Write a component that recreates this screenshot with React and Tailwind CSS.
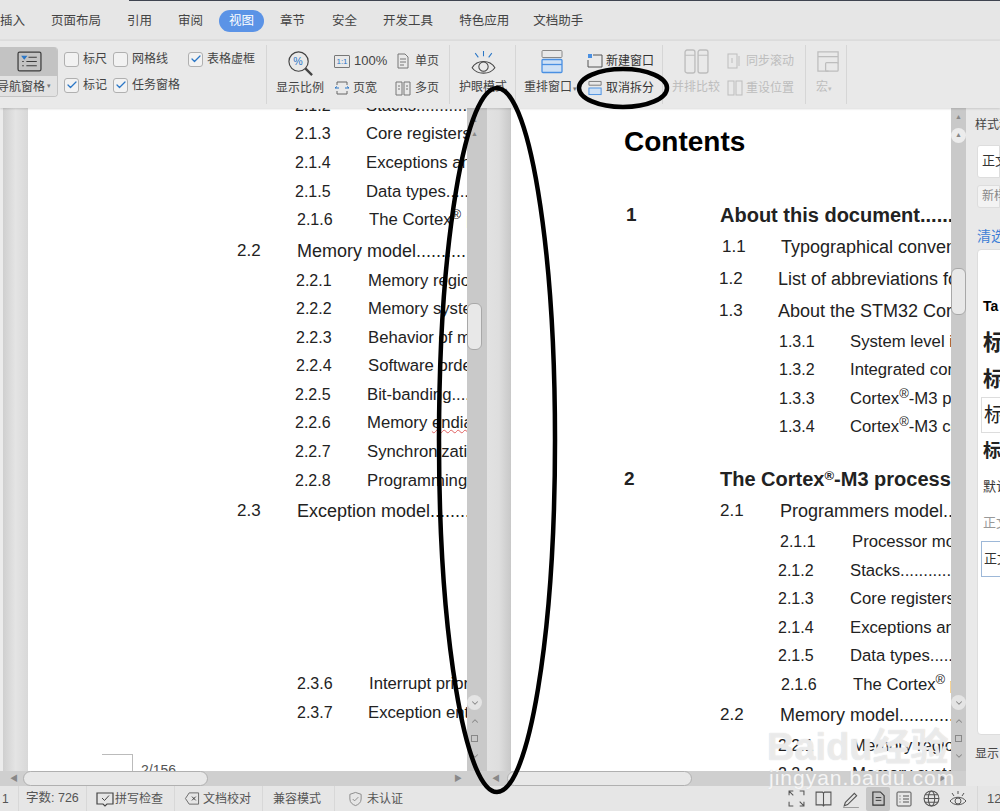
import { Check, ChevronUp, ChevronDown } from "lucide-react"

const tabs = [
  { name: '插入', cls: 'ml-0 mr-[26px]' },
  { name: '页面布局', cls: 'mr-[26px]' },
  { name: '引用', cls: 'mr-[26px]' },
  { name: '审阅', cls: 'mr-[16px]' },
  { name: '视图', cls: 'mr-[16px] px-[10px] h-[22px] rounded-full bg-[#5b93e6] text-white' },
  { name: '章节', cls: 'mr-[27px]' },
  { name: '安全', cls: 'mr-[26px]' },
  { name: '开发工具', cls: 'mr-[26px]' },
  { name: '特色应用', cls: 'mr-[24px]' },
  { name: '文档助手', cls: '' },
]

const leftRows = [
  { pl: 'pl-[267px]', w: 'w-[71px]', h: 'h-[28px]', num: '2.1.2', text: 'Stacks.....................' },
  { pl: 'pl-[267px]', w: 'w-[71px]', h: 'h-[29px]', num: '2.1.3', text: 'Core registers...........' },
  { pl: 'pl-[267px]', w: 'w-[71px]', h: 'h-[29px]', num: '2.1.4', text: 'Exceptions and fault' },
  { pl: 'pl-[267px]', w: 'w-[71px]', h: 'h-[28px]', num: '2.1.5', text: 'Data types..................' },
  { pl: 'pl-[269px]', w: 'w-[72px]', h: 'h-[31px]', num: '2.1.6', text: 'The Cortex', sup: true, orange: true },
  { pl: 'pl-[209px]', w: 'w-[60px]', h: 'h-[30px]', num: '2.2', text: 'Memory model.........................', big: true },
  { pl: 'pl-[268px]', w: 'w-[72px]', h: 'h-[28px]', num: '2.2.1', text: 'Memory regions' },
  { pl: 'pl-[268px]', w: 'w-[72px]', h: 'h-[29px]', num: '2.2.2', text: 'Memory system' },
  { pl: 'pl-[268px]', w: 'w-[72px]', h: 'h-[28px]', num: '2.2.3', text: 'Behavior of memory' },
  { pl: 'pl-[268px]', w: 'w-[72px]', h: 'h-[29px]', num: '2.2.4', text: 'Software ordering' },
  { pl: 'pl-[267px]', w: 'w-[72px]', h: 'h-[28px]', num: '2.2.5', text: 'Bit-banding..................' },
  { pl: 'pl-[267px]', w: 'w-[72px]', h: 'h-[29px]', num: '2.2.6', text: 'Memory ', squiggle: 'endianness' },
  { pl: 'pl-[267px]', w: 'w-[72px]', h: 'h-[29px]', num: '2.2.7', text: 'Synchronization' },
  { pl: 'pl-[267px]', w: 'w-[72px]', h: 'h-[30px]', num: '2.2.8', text: 'Programming hints' },
  { pl: 'pl-[209px]', w: 'w-[60px]', h: 'h-[173px]', num: '2.3', text: 'Exception model...........................', big: true },
  { pl: 'pl-[269px]', w: 'w-[72px]', h: 'h-[29px]', num: '2.3.6', text: 'Interrupt priority' },
  { pl: 'pl-[269px]', w: 'w-[71px]', h: 'h-[51px]', num: '2.3.7', text: 'Exception entry' },
]

const rightRows = [
  { pl: 'pl-[115px]', w: 'w-[94px]', h: 'h-[32px]', num: '1', text: 'About this document.......................', bold: true },
  { pl: 'pl-[211px]', w: 'w-[59px]', h: 'h-[32px]', num: '1.1', text: 'Typographical conventions', big: true },
  { pl: 'pl-[208px]', w: 'w-[59px]', h: 'h-[32px]', num: '1.2', text: 'List of abbreviations for', big: true },
  { pl: 'pl-[208px]', w: 'w-[59px]', h: 'h-[31px]', num: '1.3', text: 'About the STM32 Cortex', big: true },
  { pl: 'pl-[268px]', w: 'w-[71px]', h: 'h-[28px]', num: '1.3.1', text: 'System level interface' },
  { pl: 'pl-[268px]', w: 'w-[71px]', h: 'h-[29px]', num: '1.3.2', text: 'Integrated configurable' },
  { pl: 'pl-[268px]', w: 'w-[71px]', h: 'h-[28px]', num: '1.3.3', text: 'Cortex', sup: true, after: '-M3 processor' },
  { pl: 'pl-[268px]', w: 'w-[71px]', h: 'h-[52px]', num: '1.3.4', text: 'Cortex', sup: true, after: '-M3 core' },
  { pl: 'pl-[113px]', w: 'w-[96px]', h: 'h-[32px]', num: '2', text: 'The Cortex', sup: true, after: '-M3 processor', bold: true },
  { pl: 'pl-[209px]', w: 'w-[60px]', h: 'h-[31px]', num: '2.1', text: 'Programmers model...........................', big: true },
  { pl: 'pl-[269px]', w: 'w-[72px]', h: 'h-[29px]', num: '2.1.1', text: 'Processor mode' },
  { pl: 'pl-[267px]', w: 'w-[72px]', h: 'h-[28px]', num: '2.1.2', text: 'Stacks.......................' },
  { pl: 'pl-[267px]', w: 'w-[72px]', h: 'h-[29px]', num: '2.1.3', text: 'Core registers' },
  { pl: 'pl-[267px]', w: 'w-[72px]', h: 'h-[28px]', num: '2.1.4', text: 'Exceptions and' },
  { pl: 'pl-[267px]', w: 'w-[72px]', h: 'h-[29px]', num: '2.1.5', text: 'Data types..................' },
  { pl: 'pl-[270px]', w: 'w-[72px]', h: 'h-[30px]', num: '2.1.6', text: 'The Cortex', sup: true, after: ' processor' },
  { pl: 'pl-[209px]', w: 'w-[60px]', h: 'h-[31px]', num: '2.2', text: 'Memory model.........................', big: true },
  { pl: 'pl-[267px]', w: 'w-[74px]', h: 'h-[28px]', num: '2.2.1', text: 'Memory regions' },
  { pl: 'pl-[267px]', w: 'w-[74px]', h: 'h-[28px]', num: '2.2.2', text: 'Memory system' },
]

const styleItems = [
  { text: 'Ta', cls: 'h-[36px] text-[14px] font-bold text-black' },
  { text: '标题 1', cls: 'h-[37px] text-[22px] font-bold text-[#222]' },
  { text: '标题 2', cls: 'h-[36px] text-[21px] font-bold text-[#222]' },
  { text: '标题 3', cls: 'h-[36px] text-[20px] text-[#222] border border-[#ddd] border-r-0' },
  { text: '标题 4', cls: 'h-[36px] text-[18px] font-bold text-[#222]' },
  { text: '默认段落', cls: 'h-[36px] text-[13px] text-[#333]' },
  { text: '正文', cls: 'h-[36px] text-[13px] text-[#999]' },
  { text: '正文', cls: 'h-[36px] text-[13px] text-[#333] border border-[#9db8d8] border-r-0' },
]

const Icon = ({ className, vb = "0 0 16 16", children }) => (
  <svg viewBox={vb} fill="none" stroke="currentColor" strokeWidth="1" className={className}>{children}</svg>
)

const Box = ({ label, checked, cls }) => (
  <div className={`flex items-center gap-[4px] ${cls}`}>
    <span className="flex items-center justify-center w-[15px] h-[15px] rounded-[3px] border border-[#b0b0b0] bg-[#f2f2f2]">
      {checked && <Check size={12} strokeWidth={2.5} className="text-[#2a76c6]" />}
    </span>
    <span>{label}</span>
  </div>
)

const SmallBtn = ({ icon, label, cls = '' }) => (
  <div className={`flex items-center h-[18px] whitespace-nowrap ${cls}`}>
    {icon}
    <span>{label}</span>
  </div>
)

const Divider = () => <div className="w-px my-[4px] bg-[#d6d6d6] shrink-0"></div>

const Ribbon = () => (
  <div className="flex h-[67px] bg-[#e9e9e9] text-[12px] text-[#444] shadow-[0_1px_2px_rgba(0,0,0,0.15)] relative overflow-hidden shrink-0">
    <div className="w-[266px] shrink-0 flex">
      <div className="w-[58px] h-[50px] mt-[6px] rounded-r-[4px] overflow-hidden border-b border-r border-[#c4c4c4] shrink-0">
        <div className="h-[29px] bg-[#c3c3c3] flex items-center justify-center pl-[2px]">
          <Icon vb="0 0 24 20" className="w-[25px] h-[21px] text-[#3c3c3c]">
            <rect x="1" y="1" width="22" height="18" rx="1.5" strokeWidth="1.2" />
            <path d="M5 5h4l-2 2.5z" fill="#2a76c6" stroke="#2a76c6" />
            <path d="M11 6h8M5 10h1.5M9 10h10M5 14h1.5M9 14h10" />
          </Icon>
        </div>
        <div className="h-[21px] bg-[#e2e2e2] flex items-center -ml-[3px] whitespace-nowrap">导航窗格<span className="ml-[2px] text-[7px] text-[#777]">▾</span></div>
      </div>
      <div className="w-[49px] ml-[6px] pt-[9px] flex flex-col gap-[8px] shrink-0">
        <Box label="标尺" />
        <Box label="标记" checked />
      </div>
      <div className="w-[75px] pt-[9px] flex flex-col gap-[8px] shrink-0">
        <Box label="网格线" />
        <Box label="任务窗格" checked />
      </div>
      <div className="pt-[9px] shrink-0">
        <Box label="表格虚框" checked />
      </div>
    </div>
    <Divider />
    <div className="w-[182px] shrink-0 flex">
      <div className="w-[67px] pl-[9px] pt-[9px] shrink-0 flex flex-col">
        <div className="flex justify-center w-[49px] h-[28px]">
          <Icon vb="0 0 28 28" className="w-[27px] h-[27px] text-[#444]">
            <circle cx="12" cy="12" r="10" strokeWidth="1.2" />
            <path d="M19 19l7 7" strokeWidth="2.4" />
            <text x="6.5" y="16" fontSize="11" fill="#2a76c6" stroke="none" fontFamily="Liberation Sans">%</text>
          </Icon>
        </div>
        <div className="mt-[1px] whitespace-nowrap">显示比例</div>
      </div>
      <div className="w-[61px] pt-[11px] flex flex-col gap-[9px] shrink-0">
        <SmallBtn label="100%" cls="text-[13px]" icon={
          <span className="w-[16px] h-[13px] border border-[#777] rounded-[1px] mr-[4px] text-[8px] leading-[11px] text-center text-[#2a76c6]">1:1</span>
        } />
        <SmallBtn label="页宽" icon={
          <Icon className="w-[16px] h-[16px] mr-[3px] text-[#666]"><path d="M3 5V2h10v3M3 11v3h10v-3" /><path d="M1 8h4M11 8h4M1 8l2-1.5M15 8l-2-1.5" stroke="#2a76c6" /></Icon>
        } />
      </div>
      <div className="pt-[11px] flex flex-col gap-[9px] shrink-0">
        <SmallBtn label="单页" icon={
          <Icon className="w-[16px] h-[16px] mr-[4px] text-[#777]"><path d="M3 1h7l3 3v11H3z" /><path d="M5 6h6M5 9h6M5 12h4" /></Icon>
        } />
        <SmallBtn label="多页" icon={
          <Icon className="w-[16px] h-[16px] mr-[4px] text-[#777]"><path d="M1 2h6v13H1zM9 2h6v13H9z" /><path d="M3 6h2M3 9h2M11 6h2M11 9h2" /></Icon>
        } />
      </div>
    </div>
    <Divider />
    <div className="w-[65px] pl-[9px] pt-[7px] shrink-0 flex flex-col">
      <div className="flex justify-center w-[48px] h-[30px]">
        <Icon vb="0 0 28 28" className="w-[29px] h-[29px] text-[#444]">
          <path d="M3 19c5-8 17-8 22 0-5 7-17 7-22 0z" />
          <circle cx="14" cy="18" r="4.5" />
          <path d="M14 3v5M6 5l3 4M22 5l-3 4" stroke="#2a76c6" />
        </Icon>
      </div>
      <div className="whitespace-nowrap">护眼模式</div>
    </div>
    <Divider />
    <div className="w-[146px] shrink-0 flex">
      <div className="w-[71px] pl-[8px] pt-[8px] shrink-0 flex flex-col">
        <div className="flex justify-center w-[55px] h-[28px]">
          <Icon vb="0 0 22 24" className="w-[22px] h-[25px] text-[#888]">
            <rect x="1" y="1" width="20" height="7" rx="1" />
            <rect x="1" y="10" width="20" height="13" rx="1" fill="#cfe1f5" stroke="#4a90e2" strokeWidth="1.3" />
            <path d="M1 15h20" stroke="#4a90e2" strokeWidth="1.3" />
          </Icon>
        </div>
        <div className="mt-[1px] whitespace-nowrap">重排窗口<span className="ml-[1px] text-[7px] text-[#777]">▾</span></div>
      </div>
      <div className="pt-[11px] flex flex-col gap-[9px] shrink-0 text-[#333]">
        <SmallBtn label="新建窗口" icon={
          <Icon className="w-[16px] h-[16px] mr-[3px] text-[#555]"><path d="M6 2h9v12H1V7" /><rect x="1" y="1" width="4" height="4" fill="#4a90e2" stroke="none" /></Icon>
        } />
        <SmallBtn label="取消拆分" cls="pl-[1px]" icon={
          <Icon className="w-[15px] h-[16px] mr-[3px] text-[#777]"><path d="M1 1h13v4H1z" /><rect x="1" y="8" width="13" height="7" fill="#cfe1f5" stroke="#4a90e2" /></Icon>
        } />
      </div>
    </div>
    <Divider />
    <div className="w-[142px] shrink-0 flex text-[#bdbdbd]">
      <div className="w-[64px] pl-[9px] pt-[8px] shrink-0 flex flex-col">
        <div className="flex justify-center w-[48px] h-[28px]">
          <Icon vb="0 0 24 24" className="w-[25px] h-[25px] text-[#bdbdbd]"><rect x="1" y="1" width="9.5" height="22" rx="2" strokeWidth="1.3" /><rect x="13.5" y="1" width="9.5" height="22" rx="2" strokeWidth="1.3" /><path d="M1 6h9.5M13.5 6H23" /></Icon>
        </div>
        <div className="mt-[1px] whitespace-nowrap">并排比较</div>
      </div>
      <div className="pt-[11px] flex flex-col gap-[9px] shrink-0">
        <SmallBtn label="同步滚动" icon={
          <Icon className="w-[16px] h-[16px] mr-[3px]"><rect x="1" y="1" width="9" height="14" /><path d="M12 3v10M5 5v5" /></Icon>
        } />
        <SmallBtn label="重设位置" icon={
          <Icon className="w-[16px] h-[16px] mr-[3px]"><rect x="1" y="1" width="6" height="14" /><rect x="9" y="1" width="6" height="14" /></Icon>
        } />
      </div>
    </div>
    <Divider />
    <div className="w-[40px] pl-[10px] pt-[9px] shrink-0 flex flex-col text-[#bdbdbd]">
      <div className="flex h-[27px]">
        <Icon vb="0 0 26 26" className="w-[25px] h-[25px]"><path d="M13 22H2V2h21v12M2 7h21" strokeWidth="1.3" /><rect x="10" y="13" width="13" height="9" rx="1" strokeWidth="1.3" /></Icon>
      </div>
      <div className="mt-[1px] whitespace-nowrap">宏<span className="text-[7px]">▾</span></div>
    </div>
    <Divider />
  </div>
)

const TocRow = ({ row }) => {
  let size = 'text-[16px]'
  let textSize = 'text-[16.7px]'
  if (row.bold) { size = 'font-bold text-[19px]'; textSize = 'text-[20px]' }
  if (row.big) { size = 'text-[17px]'; textSize = 'text-[18px]' }
  return (
    <div className={`flex whitespace-nowrap leading-[20px] ${row.pl} ${row.h} ${size}`}>
      <span className={`${row.w} shrink-0`}>{row.num}</span>
      <span className={textSize}>
        {row.text}
        {row.squiggle && <span className="underline decoration-wavy decoration-[#e06060] decoration-1">{row.squiggle}</span>}
        {row.sup && <sup className="text-[13px] leading-none">®</sup>}
        {row.after}
        {row.orange && <span className="ml-[5px] text-[#d9974a]">p</span>}
      </span>
    </div>
  )
}

const VBar = ({ thumb, children, cls }) => (
  <div className={`flex flex-col items-start bg-[#c9c9c9] shrink-0 ${cls}`}>
    {children}
    <div className={`w-[15px] rounded-[6px] border border-[#a8a8a8] bg-[#e8e8e8] shrink-0 ${thumb}`}></div>
  </div>
)

const BarFoot = ({ cls }) => (
  <div className={`flex flex-col items-center w-[15px] text-[#888] ${cls}`}>
    <span className="flex items-center justify-center w-[15px] h-[15px] rounded-full bg-[#e4e4e4]">
      <ChevronDown size={10} strokeWidth={2.5} />
    </span>
    <ChevronUp size={10} strokeWidth={2.5} className="mt-[6px]" />
    <span className="w-[7px] h-[7px] border border-[#888] mt-[9px]"></span>
    <ChevronDown size={10} strokeWidth={2.5} className="mt-[9px]" />
  </div>
)

const Panes = () => (
  <div className="flex h-[663px] bg-white overflow-hidden text-[#222]">
    <div className="w-[28px] shrink-0 flex">
      <div className="w-[3px] bg-[#ececec]"></div>
      <div className="flex-1 bg-gradient-to-r from-[#cfcfcf] via-[#e4e4e4] to-[#d8d8d8]"></div>
    </div>
    <div className="w-[439px] shrink-0 overflow-hidden -mb-[20px]">
      <div className="-mt-[12px]">
        {leftRows.map((row) => <TocRow key={row.num} row={row} />)}
        <div className="flex items-start pl-[74px]">
          <div className="w-[31px] h-[18px] border-t border-r border-[#bbb]"></div>
          <span className="ml-[8px] mt-[8px] text-[14px] leading-[16px] text-[#555]">2/156</span>
        </div>
      </div>
    </div>
    <VBar cls="w-[20px] pt-[5px]" thumb="h-[47px]">
      <div className="flex flex-col items-center w-[15px] h-[190px] text-[7px] leading-[14px] text-[#888]">
        <span>▲</span>
        <span>▲</span>
      </div>
      <BarFoot cls="order-last mt-[345px]" />
    </VBar>
    <div className="w-[24px] shrink-0 bg-gradient-to-r from-[#e2e2e2] via-[#dedede] to-[#c8c8c8]"></div>
    <div className="w-[440px] shrink-0 overflow-hidden">
      <h1 className="pl-[113px] mt-[16px] h-[40px] text-[28px] leading-[36px] font-bold text-black">Contents</h1>
      <div className="mt-[41px]">
        {rightRows.map((row) => <TocRow key={row.num} row={row} />)}
      </div>
    </div>
    <VBar cls="w-[15px]" thumb="h-[47px] mt-[125px]">
      <div className="flex justify-center w-[15px] h-[20px] text-[7px] leading-[18px] text-[#888]">▲</div>
      <div className="flex justify-center w-[15px] h-[15px] items-center rounded-full bg-[#ececec] text-[7px] text-[#888]">▲</div>
      <BarFoot cls="order-last mt-[380px]" />
    </VBar>
    <div className="w-[34px] shrink-0 bg-[#e9e9e9] text-[12px] text-[#444] pl-[11px] pt-[8px] overflow-hidden whitespace-nowrap">
      <div className="h-[21px] -ml-[2px]">样式和格式</div>
      <div className="h-[33px] mt-[8px] bg-white border border-[#ddd] rounded-l-[3px] pl-[4px] text-[13px] leading-[30px] text-[#333]">正文</div>
      <div className="h-[23px] mt-[7px] bg-[#f3f3f3] border border-[#ddd] rounded-l-[3px] pl-[4px] leading-[20px] text-[#888]">新样式</div>
      <div className="mt-[18px] h-[20px] text-[14px] leading-[20px] text-[#3d7fd6]">清选格式</div>
      <div className="mt-[3px] h-[486px] bg-white border border-[#ddd] rounded-l-[4px] pt-[38px] pl-[5px] -mr-[1px]">
        {styleItems.map((item, i) => (
          <div key={i} className={`flex items-center -ml-[2px] pl-[2px] ${item.cls}`}>{item.text}</div>
        ))}
      </div>
      <div className="mt-[10px] -ml-[2px]">显示：</div>
    </div>
  </div>
)

const HBar = () => (
  <div className="flex items-center h-[15px] bg-[#cfcfcf] text-[#888] text-[8px] shrink-0">
    <div className="w-[467px] shrink-0 flex items-center">
      <span className="w-[23px] pl-[10px]">◀</span>
      <div className="w-[185px] h-[15px] rounded-full border border-[#b0b0b0] bg-[#e8e8e8]"></div>
      <span className="ml-[246px]">▶</span>
    </div>
    <span className="ml-[25px] w-[15px]">◀</span>
    <div className="w-[185px] h-[15px] rounded-full border border-[#b0b0b0] bg-[#e8e8e8]"></div>
    <span className="ml-[246px]">▶</span>
    <div className="ml-auto w-[34px] h-[15px] bg-[#e9e9e9]"></div>
  </div>
)

const StatusCell = ({ cls, children }) => (
  <div className={`flex items-center h-full border-r border-[#d8d8d8] shrink-0 ${cls}`}>{children}</div>
)

const StatusBar = () => (
  <div className="flex items-center h-[25px] bg-[#e6e6e6] text-[12px] text-[#555] whitespace-nowrap overflow-hidden">
    <StatusCell cls="w-[19px] pl-[2px]">1</StatusCell>
    <StatusCell cls="w-[68px] pl-[7px] text-[12.5px]">字数: 726</StatusCell>
    <StatusCell cls="w-[88px] pl-[9px]">
      <Icon vb="0 0 18 16" className="w-[18px] h-[16px] mr-[1px] text-[#444]"><path d="M1 2h16v11h-6l-2 2-2-2H1z" strokeWidth="1.2" /><path d="M6 7l2.5 2.5L13 4.5" stroke="#444" /></Icon>
      拼写检查
    </StatusCell>
    <StatusCell cls="w-[88px] pl-[9px]">
      <Icon className="w-[16px] h-[15px] mr-[3px] text-[#666]"><path d="M5 2h10v12H5L1 8z" /><path d="M8 6l4 4M12 6l-4 4" stroke="#333" /></Icon>
      文档校对
    </StatusCell>
    <StatusCell cls="w-[72px] pl-[10px]">兼容模式</StatusCell>
    <div className="flex items-center pl-[13px] shrink-0">
      <Icon className="w-[15px] h-[16px] mr-[4px] text-[#888]"><path d="M8 1l6 2v5c0 4-3 6-6 7-3-1-6-3-6-7V3z" /><path d="M5 8l2 2 4-4" /></Icon>
      未认证
    </div>
    <div className="flex items-center ml-auto h-full text-[#555] shrink-0">
      <Icon className="w-[17px] h-[17px] mr-[10px]"><path d="M1 5V1h4M11 1h4v4M15 11v4h-4M5 15H1v-4M1 1l4 4M15 15l-4-4" /></Icon>
      <Icon className="w-[17px] h-[17px] mr-[10px]"><path d="M1 2h6l1 1 1-1h6v12H9l-1 1-1-1H1zM8 3v12" /></Icon>
      <Icon className="w-[18px] h-[18px] mr-[6px]"><path d="M3 11l8-8 2 2-8 8-3 1zM1 16h14" /></Icon>
      <div className="flex items-center justify-center w-[24px] h-[24px] bg-[#c6c6c6] rounded-[2px] mr-[6px]">
        <Icon className="w-[15px] h-[17px] text-[#333]"><path d="M2 1h8l4 4v10H2z" strokeWidth="1.2" /><path d="M5 7h6M5 10h6" /></Icon>
      </div>
      <Icon className="w-[16px] h-[16px] mr-[11px]"><rect x="1" y="1" width="14" height="14" rx="1" /><path d="M3.5 5h1M7 5h6M3.5 8h1M7 8h6M3.5 11h1M7 11h6" /></Icon>
      <Icon className="w-[17px] h-[17px] mr-[9px]"><circle cx="8" cy="8" r="7" /><ellipse cx="8" cy="8" rx="3" ry="7" /><path d="M1 8h14M2 4.5h12M2 11.5h12" /></Icon>
      <Icon vb="0 0 18 18" className="w-[18px] h-[18px] mr-[10px]"><path d="M1 11c4-5 12-5 16 0-4 5-12 5-16 0z" /><circle cx="9" cy="11" r="3" /><path d="M9 1v3M3 3l2 3M15 3l-2 3" /></Icon>
      <div className="border-l border-[#d8d8d8] h-full pl-[9px] flex items-center w-[23px] text-[13px]">12</div>
    </div>
  </div>
)

const App = () => {
  return (
    <div className="relative w-[1000px] h-[811px] overflow-hidden font-['Liberation_Sans','Noto_Sans_CJK_SC',sans-serif] bg-[#e6e6e6]">
      <div className="h-[41px] pt-[3px] bg-[#e6e6e6] border-b-2 border-[#dedede] text-[12.5px] text-[#444] flex items-center whitespace-nowrap relative">
        <div className="absolute top-0 left-[129px] right-0 h-[1px] bg-[#3f4450]"></div>
        {tabs.map((tab) => (
          <div key={tab.name} className={`flex items-center ${tab.cls}`}>{tab.name}</div>
        ))}
      </div>
      <Ribbon />
      <Panes />
      <HBar />
      <StatusBar />

      <div className="absolute left-[767px] top-[725px] text-[38px] leading-[44px] font-bold text-white/60 [text-shadow:0_0_1px_#ccc] pointer-events-none whitespace-nowrap">
        Baidu经验
      </div>
      <div className="absolute left-[769px] top-[765px] text-[21px] leading-[26px] tracking-[1px] text-white/80 [text-shadow:0_0_1px_#ccc] pointer-events-none">jingyan.baidu.com</div>

      <svg viewBox="0 0 1000 811" fill="none" stroke="black" strokeWidth="4.5" className="absolute inset-0 w-[1000px] h-[811px] pointer-events-none">
        <ellipse cx="497" cy="440" rx="58" ry="352" />
        <ellipse cx="623" cy="88" rx="44" ry="19" />
      </svg>
    </div>
  )
}
export default App
